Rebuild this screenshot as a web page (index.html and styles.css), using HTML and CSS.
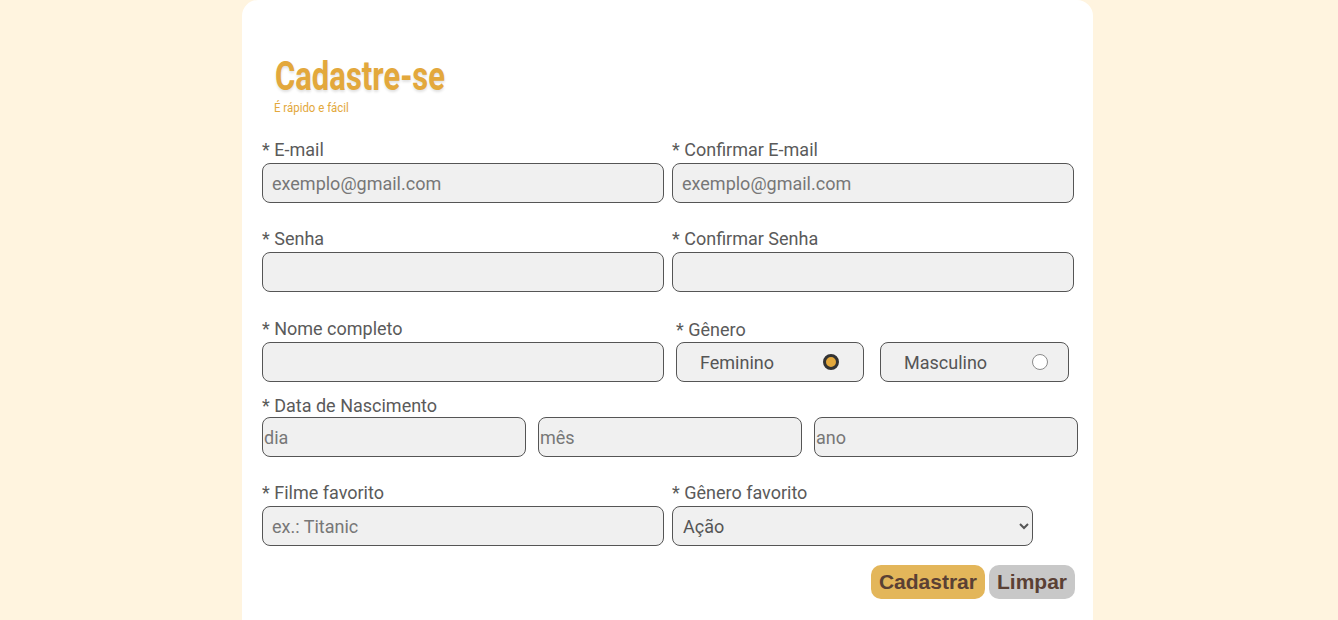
FILE: index.html
```html
<!DOCTYPE html>
<html lang="pt-BR">
<head>
<meta charset="utf-8">
<title>Cadastre-se</title>
<link rel="stylesheet" href="styles.css">
</head>
<body>
<main class="card">
  <header class="head">
    <h1 class="title">Cadastre-se</h1>
    <p class="subtitle">É rápido e fácil</p>
  </header>
  <form class="form">
    <div class="row row-two">
      <div class="field">
        <label class="label">* E-mail</label>
        <input class="input" type="text" placeholder="exemplo@gmail.com">
      </div>
      <div class="field">
        <label class="label">* Confirmar E-mail</label>
        <input class="input" type="text" placeholder="exemplo@gmail.com">
      </div>
    </div>
    <div class="row row-two row-second">
      <div class="field">
        <label class="label">* Senha</label>
        <input class="input" type="password">
      </div>
      <div class="field">
        <label class="label">* Confirmar Senha</label>
        <input class="input" type="password">
      </div>
    </div>
    <div class="row row-two row-tight">
      <div class="field">
        <label class="label">* Nome completo</label>
        <input class="input" type="text">
      </div>
      <div class="field gender">
        <span class="label label-gender">* Gênero</span>
        <div class="options">
          <label class="option opt-f">Feminino <input class="radio" type="radio" name="g" checked></label>
          <label class="option opt-m">Masculino <input class="radio" type="radio" name="g"></label>
        </div>
      </div>
    </div>
    <div class="row">
      <label class="label label-date">* Data de Nascimento</label>
      <div class="dates">
        <input class="input date" type="text" placeholder="dia">
        <input class="input date" type="text" placeholder="mês">
        <input class="input date" type="text" placeholder="ano">
      </div>
    </div>
    <div class="row row-two row-last">
      <div class="field">
        <label class="label">* Filme favorito</label>
        <input class="input" type="text" placeholder="ex.: Titanic">
      </div>
      <div class="field">
        <label class="label">* Gênero favorito</label>
        <select class="input select">
          <option>Ação</option>
          <option>Comédia</option>
          <option>Drama</option>
        </select>
      </div>
    </div>
    <div class="actions">
      <button type="button" class="btn btn-main">Cadastrar</button>
      <button type="reset" class="btn btn-clear">Limpar</button>
    </div>
  </form>
</main>
</body>
</html>
```

FILE: styles.css
```css
* { box-sizing: border-box; }

html, body {
  margin: 0;
  padding: 0;
  background: #fff4df;
  font-family: Roboto, "Liberation Sans", sans-serif;
}

body { height: 620px; overflow: hidden; padding-right: 3px; }

.card {
  width: 851px;
  margin: 0 auto;
  background: #ffffff;
  border-radius: 16px;
  min-height: 660px;
  padding: 53px 16px 40px 20px;
}

.head {
  padding-left: 13px;
  height: 85px;
}

.title {
  margin: 0;
  font-family: Roboto, sans-serif;
  font-weight: 700;
  font-size: 40px;
  line-height: 47px;
  color: #e3a83c;
  text-shadow: 0 2px 3px rgba(0,0,0,0.12);
  transform: scaleX(0.775);
  transform-origin: left top;
  white-space: nowrap;
}

.subtitle {
  margin: 0 0 0 -1px;
  font-size: 13px;
  line-height: 15px;
  color: #e3a83c;
  transform: scaleX(0.88);
  transform-origin: left top;
  white-space: nowrap;
}

.row { margin-bottom: 24px; }
.row-second { margin-bottom: 25px; }
.row-tight { margin-bottom: 12px; }
.row-last { margin-bottom: 19px; }

.row-two {
  display: grid;
  grid-template-columns: 402px 402px;
  column-gap: 8px;
}

.field { display: flex; flex-direction: column; }

.label {
  display: block;
  font-size: 18px;
  line-height: 23px;
  color: #5a5a5a;
  margin-bottom: 2px;
}

.label-gender { padding-left: 4px; margin-top: 1px; margin-bottom: 1px; }
.label-date { margin-bottom: 0; }

.input {
  height: 40px;
  width: 100%;
  border: 1px solid #555555;
  border-radius: 8px;
  background: #f0f0f0;
  font-family: Roboto, sans-serif;
  font-size: 18px;
  color: #555555;
  padding: 0 9px;
  outline: none;
}

.input::placeholder { color: #777777; }

.select {
  width: 361px;
  padding-left: 6px;
}

.dates {
  display: grid;
  grid-template-columns: 264px 264px 264px;
  column-gap: 12px;
}

.date { padding: 0 1px; }

.options {
  display: flex;
  gap: 16px;
  padding-left: 4px;
}

.option {
  display: flex;
  align-items: center;
  height: 40px;
  border: 1px solid #555555;
  border-radius: 8px;
  background: #f0f0f0;
  font-size: 18px;
  color: #555555;
  padding-left: 23px;
}

.opt-f { width: 188px; padding-right: 24px; }
.opt-m { width: 189px; padding-right: 20px; }

.radio {
  appearance: none;
  -webkit-appearance: none;
  margin: 0 0 0 auto;
  width: 16px;
  height: 16px;
  border-radius: 50%;
  border: 1px solid #8a8a8a;
  background: #ffffff;
}

.radio:checked {
  border: 3px solid #333333;
  background: #e3a83c;
}

.actions {
  display: flex;
  justify-content: flex-end;
  gap: 4px;
  padding-right: 2px;
}

.btn {
  font-family: "Liberation Sans", Arial, sans-serif;
  font-weight: 700;
  font-size: 21px;
  line-height: 24px;
  height: 34px;
  padding: 5px 8px;
  border: none;
  border-radius: 10px;
  color: #5a4034;
}

.btn-main { background: #e3b65a; }
.btn-clear { background: #c8c8c8; }
```
